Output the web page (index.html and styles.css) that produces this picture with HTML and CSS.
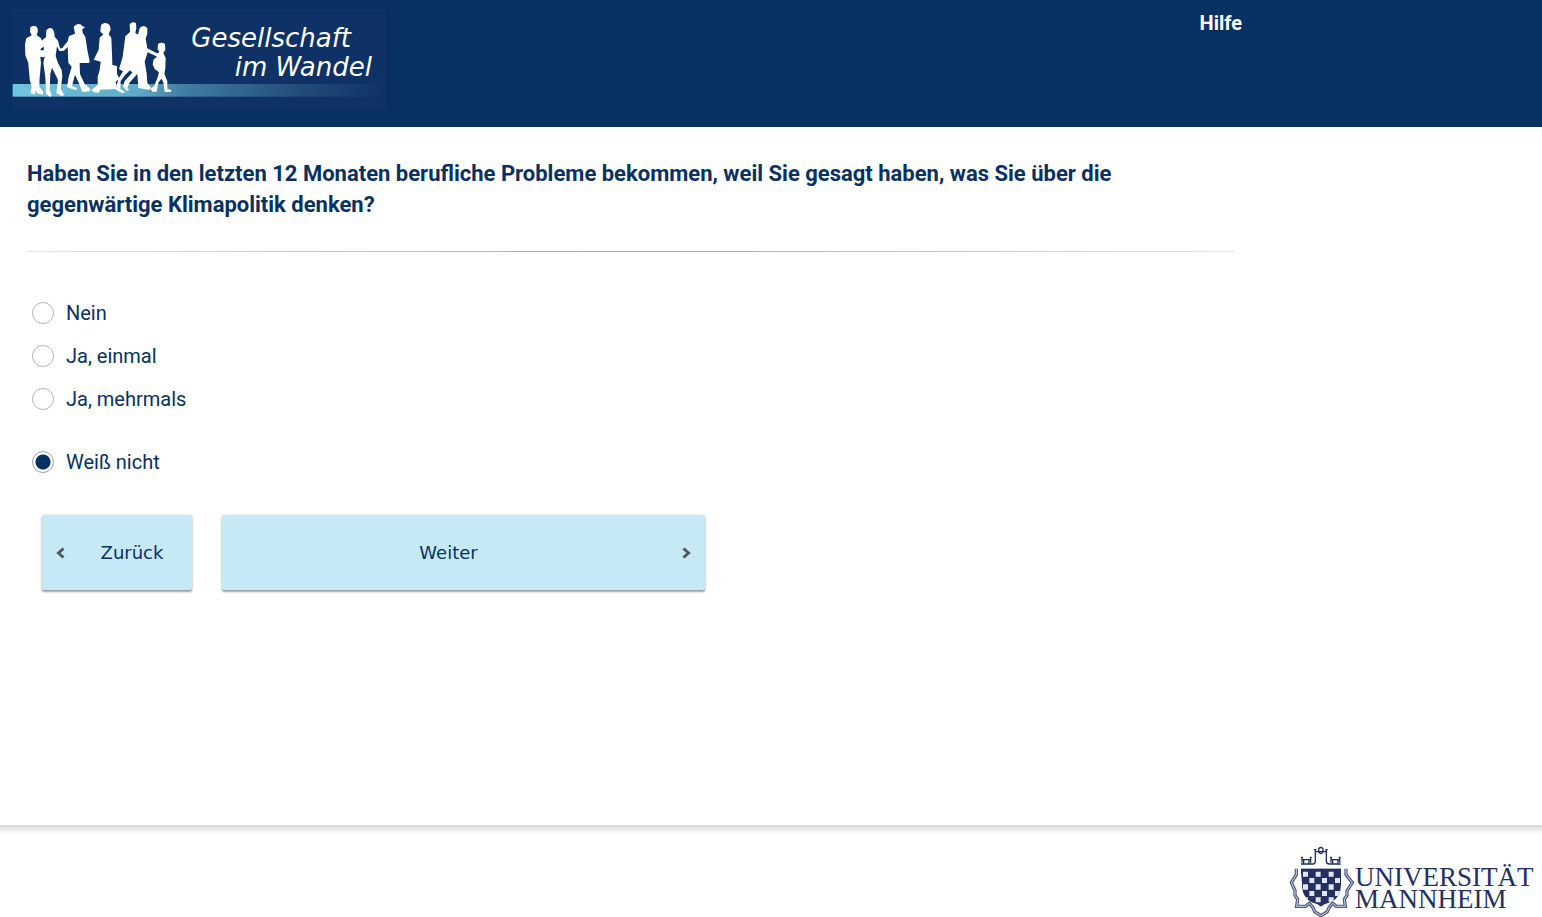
FILE: index.html
```
<!DOCTYPE html>
<html lang="de">
<head>
<meta charset="utf-8">
<meta name="viewport" content="width=device-width, initial-scale=1">
<title>Gesellschaft im Wandel</title>
<link rel="stylesheet" href="styles.css">
</head>
<body>
<header class="header">
  <div class="header-inner">
    <svg class="logo" viewBox="36 27 1125 303" role="img" aria-label="Gesellschaft im Wandel">
      <defs>
        <linearGradient id="band" x1="0" x2="1" y1="0" y2="0">
          <stop offset="0" stop-color="#6fc6de"/>
          <stop offset="0.33" stop-color="#5fadc9"/>
          <stop offset="0.45" stop-color="#417fa3"/>
          <stop offset="0.75" stop-color="#234f7b"/>
          <stop offset="1" stop-color="#0e3166"/>
        </linearGradient>
      </defs>
      <rect x="36" y="27" width="1125" height="303" fill="#0e3166"/>
      <rect x="38" y="252" width="1123" height="38" fill="url(#band)"/>
      <g class="people">
        <path d="M91 82Q98 76 108 79Q115 84 113 96L110 105L123 115L128 128L122 148L120 160L135 165L131 172L121 170L123 188L119 234L118 261L130 276L128 284L112 280L107 271L105 283L91 280L95 262L89 238L85 190L76 165L75 132L79 115L95 106L90 95Z"/>
        <path d="M139 91Q148 80 158 87Q165 96 164 110L174 122L180 145L190 145L188 153L178 153L171 139L167 168L174 189L185 210L187 229L182 268L193 285L184 288L169 280L174 240L156 203L151 222L149 270L155 286L151 291L138 281L136 232L130 188L134 170L116 163L118 151L131 151L132 140L121 146L117 138L127 121L138 111Z"/>
        <path d="M221 80L227 75Q240 68 247 78L255 82L247 88L248 99L256 110L262 150L269 184L267 189L239 189L240 222L254 252L271 267L268 274L247 276L238 252L225 224L220 243L216 258L229 263L231 270L216 267L201 261L206 231L215 201L205 188L203 141L191 153L183 149L203 124L207 108L225 101Z"/>
        <path d="M303 75Q315 63 329 75L332 88L326 102L334 114L336 160L337 195L351 198L351 222L359 237L348 244L348 256L351 267L300 269L297 278L281 277L274 270L293 255L293 230L299 210L302 185L281 179L296 149L299 113L310 103L301 95Z"/>
        <path d="M389 73Q398 62 408 70L409 85L406 99L414 104L419 84Q432 72 442 85L442 101L437 116L442 145L476 163L474 171L443 157L434 185L440 220L442 249L453 263L449 270L415 264L412 221L388 249L382 265L388 270L380 272L369 260L374 243L397 218L390 211L376 224L362 243L361 267L376 276L367 280L347 269L355 237L369 214L357 207L368 171L376 109L390 96Z"/>
        <path d="M474 132Q484 125 495 132L496 150L490 158L497 174L496 205L493 221L502 244L502 266L514 270L513 276L494 276L490 247L484 236L475 248L470 275L457 275L452 266L463 257L473 232L477 217L464 207L458 193L461 178L471 171L466 164L478 156L473 148Z"/>
      </g>
      <text class="logo-text" x="574" y="140">Gesellschaft</text>
      <text class="logo-text" x="704" y="227">im Wandel</text>
    </svg>
    <a class="help" href="#hilfe">Hilfe</a>
  </div>
</header>
<main class="main">
  <form class="survey">
    <fieldset class="question">
      <legend class="title">Haben Sie in den letzten 12 Monaten berufliche Probleme bekommen, weil Sie gesagt haben, was Sie über die gegenwärtige Klimapolitik denken?</legend>
      <div class="rule"></div>
      <div class="options">
        <label class="option"><input class="radio" type="radio" name="answer" value="1">Nein</label>
        <label class="option"><input class="radio" type="radio" name="answer" value="2">Ja, einmal</label>
        <label class="option"><input class="radio" type="radio" name="answer" value="3">Ja, mehrmals</label>
        <label class="option option-apart"><input class="radio" type="radio" name="answer" value="98" checked>Weiß nicht</label>
      </div>
    </fieldset>
    <div class="actions">
      <button class="button button-back" type="button">
        <svg class="chevron" viewBox="0 0 10 14" aria-hidden="true"><path d="M7.500 2.500L2.500 7L7.500 11.500"/></svg>
        <span class="button-label">Zurück</span>
      </button>
      <button class="button button-next" type="button">
        <span class="button-label">Weiter</span>
        <svg class="chevron" viewBox="0 0 10 14" aria-hidden="true"><path d="M2.500 2.500L7.500 7L2.500 11.500"/></svg>
      </button>
    </div>
  </form>
</main>
<footer class="footer">
  <svg class="university" viewBox="1284 842 256 75" role="img" aria-label="Universität Mannheim">
    <g transform="translate(1284 842) scale(.33333)">
      <path class="crest-line" d="M54 44V62M51 46H57M54 53H80M80 44V62M77 46H83M59 53V64M75 53V64M51 66H88Q94 65 94 58V23M90 23H97M94 29H127M124 23H131M127 23V58Q128 66 136 66H170M141 44V62M138 46H144M141 53H167M167 44V62M164 46H170M146 53V64M162 53V64M104 29V20Q111 13 117 20V29M104 31Q111 38 117 31"/>
      <path class="crest-outer" d="M37 80V98L22 122L33 146V160L41 172L38 193H65L76 184L87 197L92 209L111 221L130 209L135 197L146 184L157 193H184L181 172L189 160V146L205 122L186 98V80"/>
      <path class="crest-inner" d="M37 80V98L22 122L33 146V160L41 172L38 193H65L76 184L87 197L92 209L111 221L130 209L135 197L146 184L157 193H184L181 172L189 160V146L205 122L186 98V80"/>
      <clipPath id="shield"><path d="M50 79H171V125Q171 172 130 184Q119 187 111 194Q103 187 92 184Q53 171 54 125Z"/></clipPath>
      <g clip-path="url(#shield)">
        <rect x="50" y="79" width="121" height="116" fill="#233060"/>
        <path class="checks" d="M57 89H72V104H57ZM95 89H110V104H95ZM134 89H149V104H134ZM76 108H91V123H76ZM114 108H129V123H114ZM153 108H168V123H153ZM57 127H72V143H57ZM95 127H110V143H95ZM134 127H149V143H134ZM76 147H91V162H76ZM114 147H129V162H114ZM153 147H168V162H153ZM95 166H110V181H95ZM134 166H149V181H134ZM57 166H72V181H57Z"/>
      </g>
    </g>
    <text class="university-text" x="1355" y="886">UNIVERSITÄT</text>
    <text class="university-text" x="1355" y="908">MANNHEIM</text>
  </svg>
</footer>
</body>
</html>
```

FILE: styles.css
```
* {
  box-sizing: border-box;
}

body {
  display: flex;
  flex-direction: column;
  min-height: 100vh;
  margin: 0;
  background: #fff;
  color: #083163;
  font-family: Roboto, "Liberation Sans", sans-serif;
  font-size: 20px;
}

.header {
  background: #083163;
}

.header-inner {
  display: flex;
  justify-content: space-between;
  align-items: flex-start;
  max-width: 1254px;
  padding: 9px 12px 17px;
}

.logo {
  width: 375px;
  height: 101px;
}

.people {
  fill: #fff;
}

.logo-text {
  fill: #fff;
  font-family: "DejaVu Sans", sans-serif;
  font-size: 78px;
  font-style: italic;
}

.help {
  color: #fff;
  font-weight: 700;
  line-height: 28px;
  text-decoration: none;
}

.main {
  flex: 1;
}

.survey {
  max-width: 1262px;
  padding: 31px 27px;
}

.question {
  min-width: 0;
  margin: 0;
  padding: 0;
  border: 0;
}

.title {
  max-width: 1120px;
  padding: 0;
  font-size: 22px;
  font-weight: 700;
  line-height: 31px;
}

.rule {
  height: 1px;
  margin-top: 31px;
  background: linear-gradient(to right, #e4e4e4, #aaa, #e4e4e4);
}

.options {
  display: flex;
  flex-direction: column;
  align-items: flex-start;
  padding: 39px 5px 0;
}

.option {
  display: flex;
  align-items: center;
  gap: 12px;
  height: 43px;
}

.option-apart {
  margin-top: 20px;
}

.radio {
  appearance: none;
  width: 22px;
  height: 22px;
  margin: 0;
  border: 1px solid #b4b4b4;
  border-radius: 50%;
  background: #fff;
}

.radio:checked {
  border-color: #98a2b2;
  background: radial-gradient(circle, #083163 7px, #fff 8px);
}

.actions {
  display: flex;
  gap: 30px;
  padding: 32px 15px 0;
}

.button {
  display: flex;
  align-items: center;
  height: 75px;
  padding: 0 14px;
  border: 0;
  border-radius: 2px;
  background: #c5e9f5;
  box-shadow: 0 2px 2px rgba(0, 0, 0, .35), 0 0 3px rgba(0, 0, 0, .15);
  color: #083163;
  font-family: "DejaVu Sans", sans-serif;
  font-size: 18px;
}

.button-back {
  width: 150px;
}

.button-next {
  width: 483px;
}

.button-label {
  flex: 1;
  text-align: center;
}

.button-back .button-label {
  padding-left: 20px;
}

.button-next .button-label {
  padding-right: 20px;
}

.chevron {
  width: 10px;
  height: 14px;
  fill: none;
  stroke: #555;
  stroke-width: 3;
}

.footer {
  display: flex;
  justify-content: flex-end;
  padding: 17px 2px 0 0;
  background: linear-gradient(#d8d8d8, #e4e4e4 3px, #fff 9px);
}

.university {
  width: 256px;
  height: 75px;
}

.university-text {
  fill: #233060;
  font-family: "Liberation Serif", serif;
  font-size: 27px;
}

.crest-line,
.crest-outer,
.crest-inner {
  fill: none;
  stroke: #233060;
  stroke-width: 4;
}

.crest-outer {
  stroke: #4c5880;
  stroke-width: 10;
}

.crest-inner {
  stroke: #d5d9e6;
  stroke-width: 3;
}

.checks {
  fill: #e3e5ee;
}
```
